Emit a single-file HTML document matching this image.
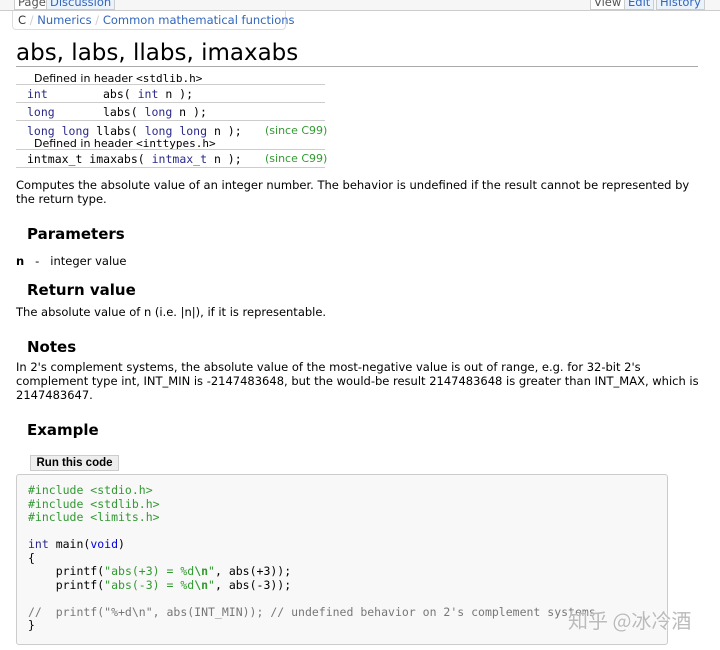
<!DOCTYPE html>
<html><head><meta charset="utf-8"><style>
body{margin:0;width:720px;height:650px;overflow:hidden;background:#fff;font-family:"DejaVu Sans","Liberation Sans",sans-serif;font-size:11.5px;color:#000;position:relative}
.a{position:absolute;white-space:nowrap}
.m{font-family:"DejaVu Sans Mono","Liberation Mono",monospace;font-size:11.5px}
.kw{color:#0000dd}
.t{color:#2a2a8a}
.h{font-weight:bold;font-size:15px}
.line{position:absolute;height:1px;background:#ccc}
.g{color:#339933}
</style></head><body>
<div class="a" style="left:0;top:0;width:720px;height:10px;background:#f6f6f6;border-bottom:1px solid #ccc"></div>
<div class="a" style="left:14px;top:-6px;font-size:11.5px;color:#555;border:1px solid #ccc;padding:0 3px;background:#fff">Page</div>
<div class="a" style="left:46px;top:-6px;font-size:11.5px;color:#36b;border:1px solid #ccc;padding:0 3px;background:#eaf3fb">Discussion</div>
<div class="a" style="left:590px;top:-6px;font-size:11.5px;color:#555;border:1px solid #ccc;padding:0 3px;background:#fff">View</div>
<div class="a" style="left:624px;top:-6px;font-size:11.5px;color:#36b;border:1px solid #ccc;padding:0 3px;background:#eaf3fb">Edit</div>
<div class="a" style="left:656px;top:-6px;font-size:11.5px;color:#36b;border:1px solid #ccc;padding:0 3px;background:#eaf3fb">History</div>
<div class="a" style="left:12px;top:11px;width:272px;height:18px;border:1px solid #ddd;border-top:none;border-radius:0 0 4px 4px"></div>
<div class="a" style="left:18px;top:13px;color:#333;font-size:11.5px">C <span style="color:#ccc">/</span> <span style="color:#36b">Numerics</span> <span style="color:#ccc">/</span> <span style="color:#36b">Common mathematical functions</span></div>
<div class="a" style="left:16px;top:39px;font-size:23px;line-height:28px">abs, labs, llabs, imaxabs</div>
<div class="line" style="left:16px;top:66px;width:682px;background:#aaa"></div>
<div class="a" style="left:34px;top:72px;font-size:11px">Defined in header <span class="m" style="font-size:11px">&lt;stdlib.h&gt;</span></div>
<div class="line" style="left:16px;top:84px;width:309px"></div>
<div class="a m" style="left:27px;top:87px"><span class="t">int</span></div><div class="a m" style="left:103px;top:87px">abs( <span class="t">int</span> n );</div>
<div class="line" style="left:16px;top:102px;width:309px"></div>
<div class="a m" style="left:27px;top:105px"><span class="t">long</span></div><div class="a m" style="left:103px;top:105px">labs( <span class="t">long</span> n );</div>
<div class="line" style="left:16px;top:120px;width:309px"></div>
<div class="a m" style="left:27px;top:124px"><span class="t">long long</span> llabs( <span class="t">long long</span> n );</div>
<div class="a" style="left:265px;top:124px;font-size:11px;color:#393">(since C99)</div>
<div class="a" style="left:34px;top:137px;font-size:11px">Defined in header <span class="m" style="font-size:11px">&lt;inttypes.h&gt;</span></div>
<div class="line" style="left:16px;top:149px;width:309px"></div>
<div class="a m" style="left:27px;top:152px">intmax_t imaxabs( <span class="t">intmax_t</span> n );</div>
<div class="a" style="left:265px;top:152px;font-size:11px;color:#393">(since C99)</div>
<div class="line" style="left:16px;top:167px;width:309px"></div>
<div class="a" style="left:16px;top:178px;line-height:14px;white-space:normal;width:690px">Computes the absolute value of an integer number. The behavior is undefined if the result cannot be represented by the return type.</div>
<div class="a h" style="left:27px;top:225px">Parameters</div>
<div class="a" style="left:16px;top:254px"><b>n</b> &nbsp; - &nbsp; integer value</div>
<div class="a h" style="left:27px;top:281px">Return value</div>
<div class="a" style="left:16px;top:305px">The absolute value of n (i.e. |n|), if it is representable.</div>
<div class="a h" style="left:27px;top:338px">Notes</div>
<div class="a" style="left:16px;top:360px;line-height:14px;white-space:normal;width:690px">In 2's complement systems, the absolute value of the most-negative value is out of range, e.g. for 32-bit 2's complement type int, INT_MIN is -2147483648, but the would-be result 2147483648 is greater than INT_MAX, which is 2147483647.</div>
<div class="a h" style="left:27px;top:421px">Example</div>
<div class="a" style="left:30px;top:455px;width:87px;height:14px;border:1px solid #ccc;background:#eee;font-weight:bold;font-size:11.5px;line-height:14px;text-align:center;font-family:'Liberation Sans',sans-serif">Run this code</div>
<div class="a" style="left:16px;top:474px;width:650px;height:169px;border:1px solid #ccc;border-radius:3px;background:#f8f8f8"></div>
<pre class="a m" style="left:28px;top:484px;margin:0;font-size:11.5px;line-height:13.5px;color:#000;white-space:pre"><span class="g">#include &lt;stdio.h&gt;
#include &lt;stdlib.h&gt;
#include &lt;limits.h&gt;</span>

<span class="t">int</span> main(<span class="kw">void</span>)
{
    printf(<span class="g">"abs(+3) = %d<b>\n</b>"</span>, abs(+3));
    printf(<span class="g">"abs(-3) = %d<b>\n</b>"</span>, abs(-3));

<span style="color:#777">//  printf("%+d\n", abs(INT_MIN)); // undefined behavior on 2's complement systems</span>
}</pre>
<div class="a" style="left:568px;top:605px;font-size:20px;color:#bbb;font-family:'Noto Sans CJK SC',sans-serif;text-shadow:0 0 2px #fff">知乎 @冰冷酒</div>
</body></html>
